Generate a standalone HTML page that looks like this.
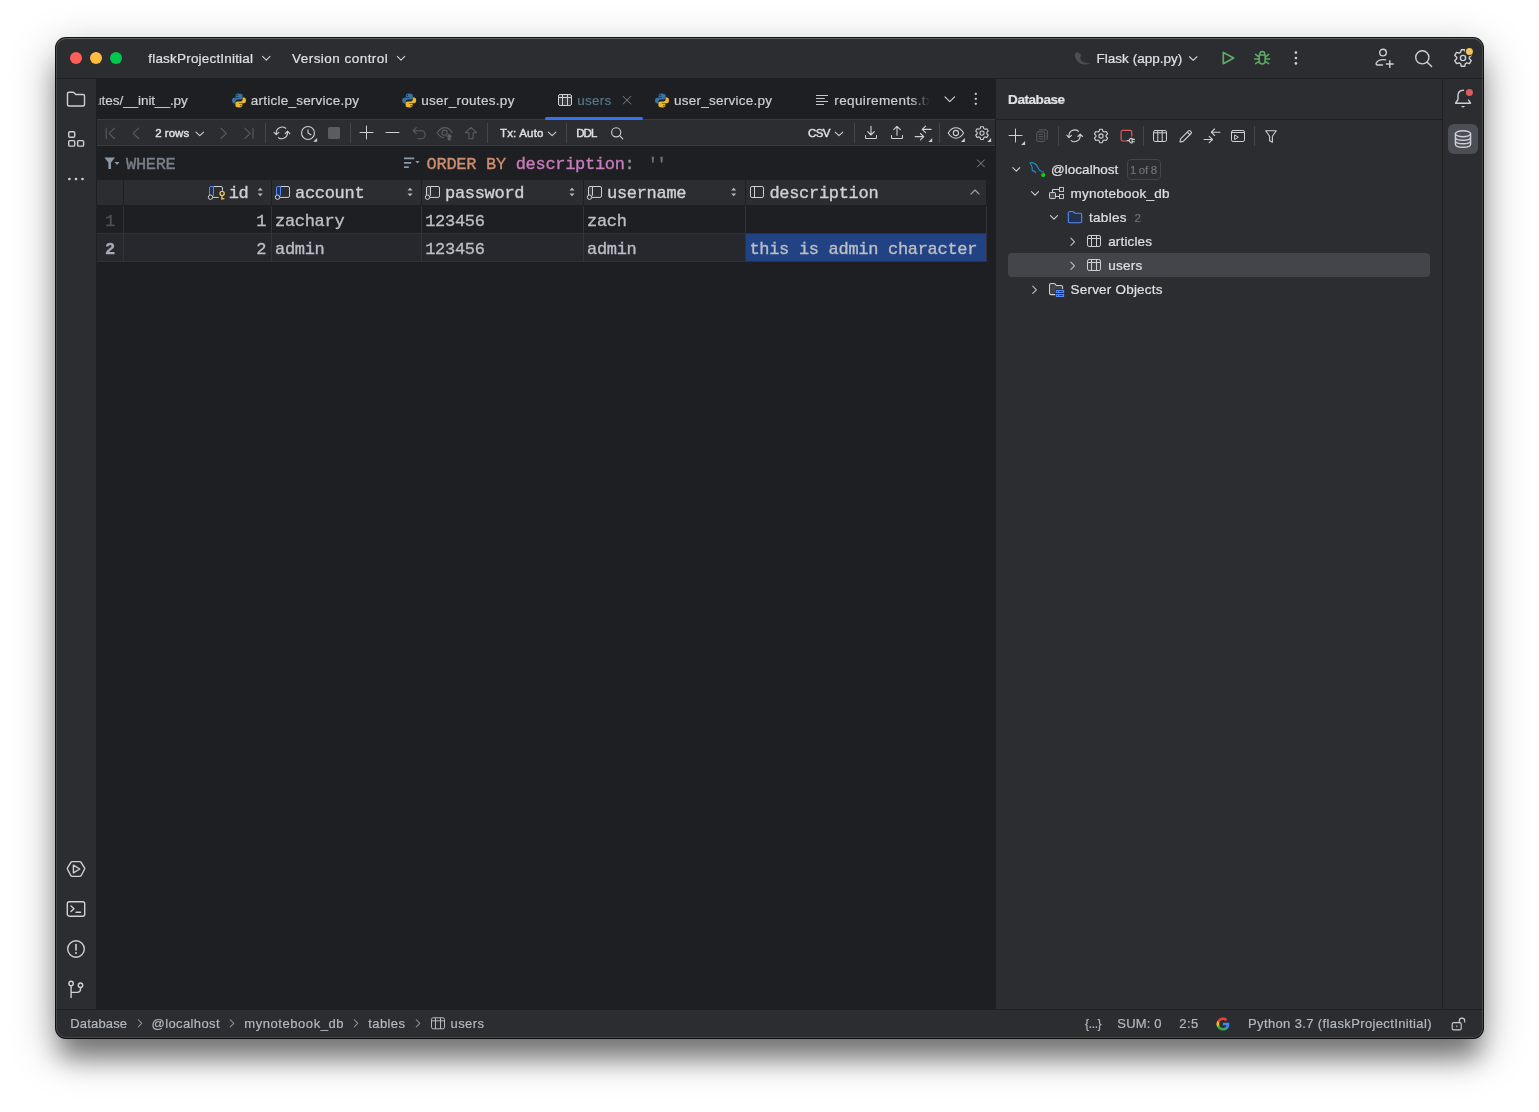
<!DOCTYPE html>
<html lang="en"><head><meta charset="utf-8"><title>flaskProjectInitial – users</title>
<style>
html,body{margin:0;padding:0;background:#fff;}
body{width:1539px;height:1112px;position:relative;overflow:hidden;}
#win{position:absolute;left:0;top:0;width:1539px;height:1112px;}
#frame{position:absolute;left:56px;top:38px;width:1427px;height:1000px;border-radius:10px;background:#2B2D30;
 box-shadow:0 0 0 1px rgba(0,0,0,.92),0 14px 44px rgba(0,0,0,.36),0 24px 24px -4px rgba(0,0,0,.37);overflow:hidden;}
.r{position:absolute;}
.i{position:absolute;overflow:visible;}
.t{position:absolute;white-space:pre;line-height:20px;height:20px;}
.s{font-family:"Liberation Sans",sans-serif;}
.m{font-family:"Liberation Mono",monospace;}
#in{position:absolute;left:-56px;top:-38px;width:1539px;height:1112px;}
.s{-webkit-text-stroke:0.2px currentColor;}
.m{-webkit-text-stroke:0.35px currentColor;}
#in{will-change:transform;}
#hl{position:absolute;left:56px;top:38px;width:1427px;height:1000px;border-radius:10px;box-shadow:inset 0 0 0 1px rgba(255,255,255,.13),inset 0 1px 0 rgba(255,255,255,.12);pointer-events:none;}

</style></head>
<body>
<div id="win">
<div id="frame"><div id="in">
<div class="r" style="left:56px;top:78px;width:1427px;height:1px;background:#1E1F22;"></div>
<div class="r" style="left:96px;top:79px;width:900px;height:930px;background:#1E1F22;"></div>
<div class="r" style="left:1442px;top:79px;width:1px;height:930px;background:#1E1F22;"></div>
<div class="r" style="left:996px;top:119px;width:446px;height:1px;background:#1E1F22;"></div>
<div class="r" style="left:56px;top:1009px;width:1427px;height:1px;background:#1E1F22;"></div>
<div class="r" style="left:97px;top:119px;width:898px;height:27px;background:#2B2D30;"></div>
<div class="r" style="left:97px;top:119px;width:898px;height:1px;background:#393B40;"></div>
<div class="r" style="left:97px;top:145px;width:898px;height:1px;background:#393B40;"></div>
<div class="r" style="left:70px;top:52px;width:12px;height:12px;background:#FF5F5A;border-radius:50%;"></div>
<div class="r" style="left:90px;top:52px;width:12px;height:12px;background:#FEBC40;border-radius:50%;"></div>
<div class="r" style="left:110px;top:52px;width:12px;height:12px;background:#00C84F;border-radius:50%;"></div>
<span class="t s" style="left:148.30px;top:48.62px;font-size:13.5px;color:#DFE1E5;letter-spacing:0.189px;">flaskProjectInitial</span>
<span class="t s" style="left:292.00px;top:48.62px;font-size:13.5px;color:#DFE1E5;letter-spacing:0.464px;">Version control</span>
<span class="t s" style="left:1096.60px;top:48.62px;font-size:13.5px;color:#DFE1E5;letter-spacing:0.005px;">Flask (app.py)</span>
<svg class="i" style="left:260px;top:52px;" width="13" height="13" fill="none"><g transform="translate(0.3 0.2)"><path d="M2.3 4.15 L6 7.85 L9.7 4.15" stroke="#CED0D6" stroke-width="1.1" stroke-linecap="round" stroke-linejoin="round"/></g></svg>
<svg class="i" style="left:395px;top:52px;" width="13" height="13" fill="none"><g transform="translate(0 0.2)"><path d="M2.3 4.15 L6 7.85 L9.7 4.15" stroke="#CED0D6" stroke-width="1.1" stroke-linecap="round" stroke-linejoin="round"/></g></svg>
<svg class="i" style="left:1187px;top:52px;" width="13" height="13" fill="none"><g transform="translate(0.2 0.6)"><path d="M2.3 4.15 L6 7.85 L9.7 4.15" stroke="#CED0D6" stroke-width="1.1" stroke-linecap="round" stroke-linejoin="round"/></g></svg>
<svg class="i" style="left:1074px;top:50px;" width="18" height="17" fill="none"><path d="M3.350 1.800C1.500 3 .6 4.800 1 6.200C1.500 8.500 2.600 10.100 4.500 12C6.500 13.800 9 14.600 11.500 14.600C13.500 14.600 15 14 16.100 13.350C13 13.400 10.500 13 8.500 11.700C7 10.600 6.300 9.500 6.500 8.500C6 7 6.500 5.500 7.500 4.400C6 4.200 4.500 3.300 3.350 1.800z" fill="#4C4F55"/></svg>
<svg class="i" style="left:1221px;top:50px;" width="17" height="17" fill="none"><path d="M2.300 2.400V13.700L12.700 8.050z" stroke="#5FAD65" stroke-width="1.700" stroke-linejoin="round"/></svg>
<svg class="i" style="left:1254px;top:50px;" width="18" height="17" fill="none"><path d="M5.900 4.100A2.400 2.700 0 0 1 10.700 4.100M5.200 5.100H11.100V10.600A2.950 3.500 0 0 1 5.200 10.600zM1.600 4.400L4.700 6.800M14.700 4.400L11.600 6.800M.6 9.100H5.200M11.100 9.100H15.700M1.600 13.600L4.800 11.600M14.700 13.600L11.500 11.600" stroke="#5FAD65" stroke-width="1.500" stroke-linecap="round" stroke-linejoin="round"/></svg>
<svg class="i" style="left:1293px;top:50px;" width="6" height="6" fill="none"><g transform="translate(0.6 0.3)"><circle cx="2.3" cy="2.3" r="1.3" fill="#CED0D6"/></g></svg>
<svg class="i" style="left:1293px;top:55px;" width="6" height="6" fill="none"><g transform="translate(0.6 0.7)"><circle cx="2.3" cy="2.3" r="1.3" fill="#CED0D6"/></g></svg>
<svg class="i" style="left:1293px;top:61px;" width="6" height="6" fill="none"><g transform="translate(0.6 0.1)"><circle cx="2.3" cy="2.3" r="1.3" fill="#CED0D6"/></g></svg>
<svg class="i" style="left:1374px;top:48px;" width="21" height="21" fill="none"><circle cx="9" cy="4.600" r="3.300" stroke="#CED0D6" stroke-width="1.4" stroke-linecap="round" stroke-linejoin="round"/><path d="M8.500 17H3.600C2.300 17 1.800 16 2.300 15C3.500 12.600 6 11.600 9 11.600C10 11.600 10.800 11.700 11.600 11.900" stroke="#CED0D6" stroke-width="1.4" stroke-linecap="round" stroke-linejoin="round"/><path d="M15.800 12.600V19.400M12.400 16H19.200" stroke="#CED0D6" stroke-width="1.4" stroke-linecap="round" stroke-linejoin="round"/></svg>
<svg class="i" style="left:1414px;top:49px;" width="21" height="21" fill="none"><circle cx="8.300" cy="8.300" r="6.600" stroke="#CED0D6" stroke-width="1.4" stroke-linecap="round" stroke-linejoin="round"/><path d="M13.200 13.200L17.600 17.600" stroke="#CED0D6" stroke-width="1.4" stroke-linecap="round" stroke-linejoin="round"/></svg>
<svg class="i" style="left:1453px;top:48px;" width="21" height="21" fill="none"><path d="M8.300 1.700h3.400l.6 2.500 1.700 1 2.500-.8 1.700 3-1.900 1.800v1.600l1.900 1.800-1.700 3-2.500-.8-1.700 1-.6 2.500H8.300l-.6-2.500-1.700-1-2.500.8-1.700-3 1.900-1.800V9.200L1.800 7.400l1.700-3 2.500.8 1.700-1z" stroke="#CED0D6" stroke-width="1.4" stroke-linecap="round" stroke-linejoin="round"/><circle cx="10" cy="10" r="2.600" stroke="#CED0D6" stroke-width="1.4" stroke-linecap="round" stroke-linejoin="round"/><circle cx="16.400" cy="3.500" r="4.600" fill="#2B2D30"/><circle cx="16.400" cy="3.500" r="3.500" fill="#F2C55C"/></svg>
<svg class="i" style="left:66px;top:89px;" width="21" height="21" fill="none"><path d="M1.500 4.700Q1.500 3.200 3 3.200H6.800Q7.500 3.200 8 3.700L9.800 5.500H17Q18.500 5.500 18.500 7V15.500Q18.500 17 17 17H3Q1.500 17 1.500 15.500z" stroke="#CED0D6" stroke-width="1.4" stroke-linecap="round" stroke-linejoin="round"/></svg>
<svg class="i" style="left:66px;top:129px;" width="21" height="21" fill="none"><rect x="2.700" y="2.800" width="6" height="5.500" rx="1.200" stroke="#CED0D6" stroke-width="1.4" stroke-linecap="round" stroke-linejoin="round"/><rect x="2.700" y="11.600" width="6" height="5.500" rx="1.200" stroke="#CED0D6" stroke-width="1.4" stroke-linecap="round" stroke-linejoin="round"/><rect x="11.600" y="11.600" width="6" height="5.500" rx="1.200" stroke="#CED0D6" stroke-width="1.4" stroke-linecap="round" stroke-linejoin="round"/></svg>
<svg class="i" style="left:67px;top:176px;" width="6" height="6" fill="none"><g transform="translate(0.05 0.65)"><circle cx="2.35" cy="2.35" r="1.35" fill="#CED0D6"/></g></svg>
<svg class="i" style="left:73px;top:176px;" width="6" height="6" fill="none"><g transform="translate(0.65 0.65)"><circle cx="2.35" cy="2.35" r="1.35" fill="#CED0D6"/></g></svg>
<svg class="i" style="left:80px;top:176px;" width="6" height="6" fill="none"><g transform="translate(0.15 0.65)"><circle cx="2.35" cy="2.35" r="1.35" fill="#CED0D6"/></g></svg>
<svg class="i" style="left:66px;top:859px;" width="21" height="21" fill="none"><path d="M6.300 1.800H13.700Q14.600 1.800 15.100 2.600L18.500 8.800Q19 9.500 18.500 10.200L15.100 17.400Q14.600 18.200 13.700 18.200H6.300Q5.400 18.200 4.900 17.400L1.500 10.200Q1 9.500 1.500 8.800L4.900 2.600Q5.400 1.800 6.300 1.800z" stroke="#CED0D6" stroke-width="1.4" stroke-linecap="round" stroke-linejoin="round" transform="translate(0 1) scale(1 .9)"/><path d="M7.400 6.200V13.800L13.800 10z" stroke="#CED0D6" stroke-width="1.4" stroke-linecap="round" stroke-linejoin="round"/></svg>
<svg class="i" style="left:66px;top:899px;" width="21" height="21" fill="none"><rect x="1.300" y="2.800" width="17.400" height="14.400" rx="2" stroke="#CED0D6" stroke-width="1.4" stroke-linecap="round" stroke-linejoin="round"/><path d="M5 7L8 9.800L5 12.600M10 13.200H14.500" stroke="#CED0D6" stroke-width="1.4" stroke-linecap="round" stroke-linejoin="round"/></svg>
<svg class="i" style="left:66px;top:939px;" width="21" height="21" fill="none"><circle cx="10" cy="10" r="8.300" stroke="#CED0D6" stroke-width="1.4" stroke-linecap="round" stroke-linejoin="round"/><path d="M10 5.500V11" stroke="#CED0D6" stroke-width="1.6" stroke-linecap="round" stroke-linejoin="round"/><circle cx="10" cy="14" r="1" fill="#CED0D6"/></svg>
<svg class="i" style="left:66px;top:979px;" width="21" height="21" fill="none"><circle cx="5.100" cy="4.500" r="2.200" stroke="#CED0D6" stroke-width="1.4" stroke-linecap="round" stroke-linejoin="round"/><circle cx="14.500" cy="6.200" r="2.200" stroke="#CED0D6" stroke-width="1.4" stroke-linecap="round" stroke-linejoin="round"/><path d="M5.100 6.800V18.500M14.500 8.500V10Q14.500 13.400 11 13.400H5.100" stroke="#CED0D6" stroke-width="1.4" stroke-linecap="round" stroke-linejoin="round"/></svg>
<svg class="i" style="left:1453px;top:88px;" width="21" height="21" fill="none"><path d="M10.500 2.200C7 2.200 5 4.500 5 7.500V11.500L2.500 15.200H17.500L15.500 12" stroke="#CED0D6" stroke-width="1.4" stroke-linecap="round" stroke-linejoin="round"/><path d="M7.800 18H12.200L10 19.800z" fill="#CED0D6"/><circle cx="16.400" cy="4.500" r="4.600" fill="#2B2D30"/><circle cx="16.400" cy="4.500" r="3.500" fill="#DB5C5C"/></svg>
<div class="r" style="left:1448px;top:124px;width:30px;height:30px;background:#4B4E55;border-radius:6px;"></div>
<svg class="i" style="left:1453px;top:129px;" width="21" height="21" fill="none"><ellipse cx="10" cy="4.800" rx="7.600" ry="3" stroke="#CED0D6" stroke-width="1.4" stroke-linecap="round" stroke-linejoin="round"/><path d="M2.400 4.800V15.200C2.400 16.900 5.800 18.200 10 18.200S17.600 16.900 17.600 15.200V4.800M2.400 8.300C2.400 10 5.800 11.300 10 11.300S17.600 10 17.600 8.300M2.400 11.800C2.400 13.500 5.800 14.800 10 14.800S17.600 13.500 17.600 11.800" stroke="#CED0D6" stroke-width="1.4" stroke-linecap="round" stroke-linejoin="round"/></svg>
<div class="r" style="left:97px;top:84px;width:110px;height:30px;overflow:hidden;-webkit-mask-image:linear-gradient(90deg,transparent 0,#000 4px);mask-image:linear-gradient(90deg,transparent 0,#000 4px)">
<span class="t s" style="left:-14.73px;top:6.62px;font-size:13.5px;color:#CDD0D6;letter-spacing:-0.061px;">routes/__init__.py</span>
</div>
<svg class="i" style="left:232px;top:93px;" width="15" height="15" fill="none"><g transform="translate(-1.000 -0.500) scale(1.0000 1.0000)"><path d="M7.9 1C5.9 1 4.6 1.5 4.6 3v1.7h3.5v.6H3.2C1.7 5.3 1 6.5 1 8.1c0 1.7.7 2.8 2.1 2.8h1.3V9.2c0-1.3 1.1-2.3 2.4-2.3h3c1 0 1.8-.8 1.8-1.8V3c0-1.2-1.2-2-3.700-2zM6.100 2c.4 0 .7.3.7.7s-.3.7-.7.7-.7-.3-.7-.7.3-.7.7-.7z" fill="#3773A5"/>
<path d="M8.100 15c2 0 3.300-.5 3.300-2v-1.700H7.900v-.6h4.900c1.500 0 2.200-1.200 2.200-2.800 0-1.700-.7-2.800-2.100-2.800h-1.300v1.700c0 1.300-1.100 2.300-2.400 2.300h-3c-1 0-1.800.8-1.800 1.800V13c0 1.200 1.200 2 3.700 2zm1.800-1c-.4 0-.7-.3-.7-.7s.3-.7.7-.7.7.3.7.7-.3.7-.7.7z" fill="#E6B930"/></g></svg>
<span class="t s" style="left:250.80px;top:90.62px;font-size:13.5px;color:#CDD0D6;letter-spacing:0.230px;">article_service.py</span>
<svg class="i" style="left:402px;top:93px;" width="15" height="15" fill="none"><g transform="translate(-0.800 -0.500) scale(1.0000 1.0000)"><path d="M7.9 1C5.9 1 4.6 1.5 4.6 3v1.7h3.5v.6H3.2C1.7 5.3 1 6.5 1 8.1c0 1.7.7 2.8 2.1 2.8h1.3V9.2c0-1.3 1.1-2.3 2.4-2.3h3c1 0 1.8-.8 1.8-1.8V3c0-1.2-1.2-2-3.700-2zM6.100 2c.4 0 .7.3.7.7s-.3.7-.7.7-.7-.3-.7-.7.3-.7.7-.7z" fill="#3773A5"/>
<path d="M8.100 15c2 0 3.300-.5 3.300-2v-1.700H7.900v-.6h4.900c1.500 0 2.200-1.200 2.200-2.800 0-1.700-.7-2.800-2.100-2.800h-1.300v1.700c0 1.300-1.100 2.300-2.400 2.300h-3c-1 0-1.800.8-1.800 1.800V13c0 1.200 1.200 2 3.700 2zm1.800-1c-.4 0-.7-.3-.7-.7s.3-.7.7-.7.7.3.7.7-.3.7-.7.7z" fill="#E6B930"/></g></svg>
<span class="t s" style="left:421.20px;top:90.62px;font-size:13.5px;color:#CDD0D6;letter-spacing:0.300px;">user_routes.py</span>
<svg class="i" style="left:558px;top:94px;" width="15" height="13" fill="none"><rect x=".5" y=".5" width="13" height="11" rx="1.600" stroke="#CED0D6" stroke-width="1" fill="#3A3C41"/><path d="M.5 3.500H13.500M4.500 .5V11.500M9.500 .5V11.500" stroke="#CED0D6" stroke-width="1"/></svg>
<span class="t s" style="left:577.20px;top:90.62px;font-size:13.5px;color:#55788B;letter-spacing:0.247px;">users</span>
<svg class="i" style="left:622px;top:95px;" width="11" height="11" fill="none"><g transform="translate(0 0.2)"><path d="M1.200 1.200L8.800 8.800M8.800 1.200L1.200 8.800" stroke="#7C8087" stroke-width="1" stroke-linecap="round"/></g></svg>
<div class="r" style="left:545px;top:117px;width:98px;height:3px;background:#3574F0;border-radius:1.5px;"></div>
<svg class="i" style="left:655px;top:93px;" width="15" height="15" fill="none"><g transform="translate(-1.000 -0.500) scale(1.0000 1.0000)"><path d="M7.9 1C5.9 1 4.6 1.5 4.6 3v1.7h3.5v.6H3.2C1.7 5.3 1 6.5 1 8.1c0 1.7.7 2.8 2.1 2.8h1.3V9.2c0-1.3 1.1-2.3 2.4-2.3h3c1 0 1.8-.8 1.8-1.8V3c0-1.2-1.2-2-3.700-2zM6.100 2c.4 0 .7.3.7.7s-.3.7-.7.7-.7-.3-.7-.7.3-.7.7-.7z" fill="#3773A5"/>
<path d="M8.100 15c2 0 3.300-.5 3.300-2v-1.700H7.900v-.6h4.900c1.500 0 2.200-1.200 2.200-2.800 0-1.700-.7-2.800-2.100-2.800h-1.300v1.700c0 1.300-1.100 2.300-2.400 2.300h-3c-1 0-1.800.8-1.800 1.800V13c0 1.200 1.200 2 3.700 2zm1.800-1c-.4 0-.7-.3-.7-.7s.3-.7.7-.7.7.3.7.7-.3.7-.7.7z" fill="#E6B930"/></g></svg>
<span class="t s" style="left:674.00px;top:90.62px;font-size:13.5px;color:#CDD0D6;letter-spacing:0.247px;">user_service.py</span>
<svg class="i" style="left:816px;top:95px;" width="14" height="12" fill="none"><path d="M0 .5H12M0 3.500H8.800M0 6.500H12M0 9.500H8" stroke="#C4C7CD" stroke-width="1"/></svg>
<div class="r" style="left:830px;top:84px;width:100px;height:30px;overflow:hidden;-webkit-mask-image:linear-gradient(90deg,#000 0,#000 81px,transparent 100px);mask-image:linear-gradient(90deg,#000 0,#000 81px,transparent 100px)">
<span class="t s" style="left:4.30px;top:6.62px;font-size:13.5px;color:#CDD0D6;letter-spacing:0.380px;">requirements.txt</span>
</div>
<svg class="i" style="left:943px;top:93px;" width="13" height="13" fill="none"><g transform="translate(0.8 0.2)"><path d="M1.2000000000000002 3.6 L6 8.4 L10.8 3.6" stroke="#CED0D6" stroke-width="1.15" stroke-linecap="round" stroke-linejoin="round"/></g></svg>
<svg class="i" style="left:973px;top:91px;" width="6" height="6" fill="none"><g transform="translate(0.65 0.65)"><circle cx="2.15" cy="2.15" r="1.15" fill="#CED0D6"/></g></svg>
<svg class="i" style="left:973px;top:96px;" width="6" height="6" fill="none"><g transform="translate(0.65 0.65)"><circle cx="2.15" cy="2.15" r="1.15" fill="#CED0D6"/></g></svg>
<svg class="i" style="left:973px;top:101px;" width="6" height="6" fill="none"><g transform="translate(0.65 0.65)"><circle cx="2.15" cy="2.15" r="1.15" fill="#CED0D6"/></g></svg>
<svg class="i" style="left:102px;top:125px;" width="17" height="17" fill="none"><g transform="translate(0.2 0.1)"><path d="M4 3V13.400M12.200 3L6.800 8.200L12.200 13.400" stroke="#5A5D63" stroke-width="1.1" stroke-linecap="round" stroke-linejoin="round"/></g></svg>
<svg class="i" style="left:128px;top:125px;" width="17" height="17" fill="none"><g transform="translate(0.0 0.1)"><path d="M10.600 3L5.200 8.200L10.600 13.400" stroke="#5A5D63" stroke-width="1.1" stroke-linecap="round" stroke-linejoin="round"/></g></svg>
<span class="t s" style="left:155.20px;top:122.92px;font-size:11.5px;color:#DFE1E5;letter-spacing:0.026px;-webkit-text-stroke:0.4px currentColor;">2 rows</span>
<svg class="i" style="left:193px;top:127px;" width="13" height="13" fill="none"><g transform="translate(0.8 0.9)"><path d="M2.2 4.25 L6 7.75 L9.8 4.25" stroke="#CED0D6" stroke-width="1.1" stroke-linecap="round" stroke-linejoin="round"/></g></svg>
<svg class="i" style="left:215px;top:125px;" width="17" height="17" fill="none"><g transform="translate(0.5 0.1)"><path d="M5.400 3L10.800 8.200L5.400 13.400" stroke="#5A5D63" stroke-width="1.1" stroke-linecap="round" stroke-linejoin="round"/></g></svg>
<svg class="i" style="left:241px;top:125px;" width="17" height="17" fill="none"><g transform="translate(0.0 0.1)"><path d="M12 3V13.400M3.800 3L9.200 8.200L3.800 13.400" stroke="#5A5D63" stroke-width="1.1" stroke-linecap="round" stroke-linejoin="round"/></g></svg>
<div class="r" style="left:265.0px;top:123px;width:1px;height:20px;background:#43454A;"></div>
<svg class="i" style="left:274px;top:125px;" width="17" height="17" fill="none"><g transform="translate(0.3 0.2)"><path d="M11.400 3.100A5.800 5.800 0 0 0 2 7.800V9.300M-.2 7.100L2 9.500L4.500 7.200M4.100 12.500A5.800 5.800 0 0 0 13.200 7.800V6.300M10.900 8.400L13.200 6L15.500 8.400" stroke="#CED0D6" stroke-width="1.100" stroke-linecap="round" stroke-linejoin="round"/></g></svg>
<svg class="i" style="left:300px;top:125px;" width="19" height="19" fill="none"><circle cx="8" cy="8" r="6.500" stroke="#CED0D6" stroke-width="1.1" stroke-linecap="round" stroke-linejoin="round"/><path d="M8 4.800V8L10.900 9.800" stroke="#CED0D6" stroke-width="1.1" stroke-linecap="round" stroke-linejoin="round"/><path d="M17.100 12.900V16.800H13.200z" fill="#CED0D6"/></svg>
<div class="r" style="left:328.2px;top:127px;width:12px;height:12px;background:#5C5C5E;border-radius:1.5px;"></div>
<div class="r" style="left:350.1px;top:123px;width:1px;height:20px;background:#43454A;"></div>
<svg class="i" style="left:358px;top:124px;" width="18" height="18" fill="none"><path d="M8.500 2V15M2 8.500H15" stroke="#CED0D6" stroke-width="1" stroke-linecap="round" stroke-linejoin="round"/></svg>
<svg class="i" style="left:384px;top:124px;" width="18" height="18" fill="none"><path d="M2 8.500H15" stroke="#CED0D6" stroke-width="1" stroke-linecap="round" stroke-linejoin="round"/></svg>
<svg class="i" style="left:411px;top:125px;" width="17" height="17" fill="none"><g transform="translate(0.4 0.2)"><path d="M4.800 2.500L1.800 5.500L4.800 8.500M2 5.500H9.800A4 4 0 0 1 9.800 13.500H6.500" stroke="#5A5D63" stroke-width="1.1" stroke-linecap="round" stroke-linejoin="round"/></g></svg>
<svg class="i" style="left:437px;top:125px;" width="17" height="17" fill="none"><path d="M.2 7.700C2.500 4 5 2.600 7.800 2.600S13 4 15.400 7.700M.2 7.700C2 10.500 4 12.300 6.800 12.700" stroke="#5A5D63" stroke-width="1.1" stroke-linecap="round" stroke-linejoin="round"/><circle cx="7.600" cy="7.700" r="2.600" stroke="#5A5D63" stroke-width="1.1" stroke-linecap="round" stroke-linejoin="round"/><path d="M12.200 8.100L15.900 12H14.100V15.800H10.300V12H8.500z" fill="#5A5D63" stroke="#2B2D30" stroke-width=".7"/></svg>
<svg class="i" style="left:462px;top:125px;" width="17" height="17" fill="none"><g transform="translate(0.8 0)"><path d="M8.200 2.300L13.800 7.700H10.300V13.700H6.100V7.700H2.600z" stroke="#5A5D63" stroke-width="1.1" stroke-linecap="round" stroke-linejoin="round"/></g></svg>
<div class="r" style="left:487.0px;top:123px;width:1px;height:20px;background:#43454A;"></div>
<span class="t s" style="left:500.00px;top:122.92px;font-size:11.5px;color:#DFE1E5;letter-spacing:0.173px;-webkit-text-stroke:0.4px currentColor;">Tx: Auto</span>
<svg class="i" style="left:546px;top:127px;" width="13" height="13" fill="none"><g transform="translate(0.1 0.9)"><path d="M2.2 4.25 L6 7.75 L9.8 4.25" stroke="#CED0D6" stroke-width="1.1" stroke-linecap="round" stroke-linejoin="round"/></g></svg>
<div class="r" style="left:566.3px;top:123px;width:1px;height:20px;background:#43454A;"></div>
<span class="t s" style="left:576.30px;top:122.92px;font-size:11.5px;color:#DFE1E5;letter-spacing:-1.003px;-webkit-text-stroke:0.4px currentColor;">DDL</span>
<svg class="i" style="left:609px;top:125px;" width="17" height="17" fill="none"><circle cx="7.200" cy="7.300" r="4.600" stroke="#CED0D6" stroke-width="1.1" stroke-linecap="round" stroke-linejoin="round"/><path d="M10.600 10.700L13.800 13.900" stroke="#CED0D6" stroke-width="1.1" stroke-linecap="round" stroke-linejoin="round"/></svg>
<span class="t s" style="left:808.00px;top:122.92px;font-size:11.5px;color:#DFE1E5;letter-spacing:-0.623px;-webkit-text-stroke:0.4px currentColor;">CSV</span>
<svg class="i" style="left:833px;top:127px;" width="13" height="13" fill="none"><g transform="translate(0 0.9)"><path d="M2.2 4.25 L6 7.75 L9.8 4.25" stroke="#CED0D6" stroke-width="1.1" stroke-linecap="round" stroke-linejoin="round"/></g></svg>
<div class="r" style="left:853.8px;top:123px;width:1px;height:20px;background:#43454A;"></div>
<svg class="i" style="left:863px;top:125px;" width="17" height="17" fill="none"><path d="M8 1.300V9.900M4.700 6.700L8 10L11.300 6.700" stroke="#CED0D6" stroke-width="1.1" stroke-linecap="round" stroke-linejoin="round"/><path d="M2.500 10.500V13.500H13.500V10.500" stroke="#CED0D6" stroke-width="1" stroke-linecap="round" stroke-linejoin="round"/></svg>
<svg class="i" style="left:889px;top:125px;" width="17" height="17" fill="none"><path d="M8 10.300V1.500M4.700 4.700L8 1.400L11.300 4.700" stroke="#CED0D6" stroke-width="1.1" stroke-linecap="round" stroke-linejoin="round"/><path d="M2.500 10.500V13.500H13.500V10.500" stroke="#CED0D6" stroke-width="1" stroke-linecap="round" stroke-linejoin="round"/></svg>
<svg class="i" style="left:915px;top:125px;" width="19" height="19" fill="none"><path d="M16.100 4.400H7.300M10.600 1.200L7.200 4.400L10.600 7.700M.2 11.650H8.700M5.400 8.500L8.800 11.650L5.400 14.800" stroke="#CED0D6" stroke-width="1.1" stroke-linecap="round" stroke-linejoin="round"/><path d="M17.2 13.099999999999998V16.9H13.399999999999999z" fill="#CED0D6"/></svg>
<div class="r" style="left:939.0px;top:123px;width:1px;height:20px;background:#43454A;"></div>
<svg class="i" style="left:948px;top:125px;" width="19" height="19" fill="none"><path d="M.2 8C2.400 4.500 5 2.800 7.900 2.800S13.400 4.500 15.600 8C13.400 11.500 10.800 13.200 7.900 13.200S2.400 11.500 .2 8z" stroke="#CED0D6" stroke-width="1.1" stroke-linecap="round" stroke-linejoin="round"/><circle cx="7.900" cy="8" r="2.600" stroke="#CED0D6" stroke-width="1.1" stroke-linecap="round" stroke-linejoin="round"/><path d="M16.8 13.099999999999998V16.9H13.0z" fill="#CED0D6"/></svg>
<svg class="i" style="left:974px;top:125px;" width="19" height="19" fill="none"><g transform="translate(8 8.100) scale(.95) translate(-8 -8)"><path d="M6.600 1.300h2.800l.5 2 1.300.75 2-.6 1.400 2.400-1.500 1.450v1.400l1.500 1.450-1.400 2.400-2-.6-1.300.75-.5 2H6.600l-.5-2-1.300-.75-2 .6-1.400-2.400 1.500-1.450V7.300L1.400 5.850l1.400-2.400 2 .6 1.300-.75z" stroke="#CED0D6" stroke-width="1.15" stroke-linecap="round" stroke-linejoin="round"/><circle cx="8" cy="8" r="2.200" stroke="#CED0D6" stroke-width="1.15" stroke-linecap="round" stroke-linejoin="round"/></g><path d="M17.1 13.099999999999998V16.9H13.3z" fill="#CED0D6"/></svg>
<svg class="i" style="left:104px;top:157px;" width="17" height="14" fill="none"><path d="M.3 .5H11.100L7 5.600V11.900H4.400V5.600z" fill="#8C99A6"/><path d="M10.500 5H15.500L13 8z" fill="#8C99A6"/></svg>
<span class="t m" style="left:126.00px;top:154.77px;font-size:17px;color:#78808B;letter-spacing:-0.302px;">WHERE</span>
<svg class="i" style="left:404px;top:157px;" width="17" height="12" fill="none"><g transform="translate(0 0.5)"><path d="M0 .9H10.200M0 5.300H7.200M0 9.700H4.800" stroke="#8C99A6" stroke-width="1.700"/><path d="M11.300 3.600H15.700L13.500 5.900z" fill="#8C99A6"/></g></svg>
<span class="t m" style="left:426.60px;top:154.77px;font-size:17px;color:#CF8E6D;letter-spacing:-0.302px;">ORDER BY</span>
<span class="t m" style="left:515.70px;top:154.77px;font-size:17px;color:#C77DBB;letter-spacing:-0.302px;">description</span>
<span class="t m" style="left:624.60px;top:154.77px;font-size:17px;color:#8C99A6;letter-spacing:-0.302px;">:</span>
<span class="t m" style="left:647.80px;top:154.77px;font-size:17px;color:#70747B;letter-spacing:-1.400px;">&#x27;&#x27;</span>
<svg class="i" style="left:976px;top:158px;" width="11" height="11" fill="none"><g transform="translate(0 0.5)"><path d="M1.400 1.400L8.400 8.400M8.400 1.400L1.400 8.400" stroke="#868A91" stroke-width="1" stroke-linecap="round"/></g></svg>
<div class="r" style="left:97px;top:180px;width:889px;height:25px;background:#2B2D30;"></div>
<div class="r" style="left:123px;top:180px;width:1px;height:25px;background:#1E1F22;"></div>
<div class="r" style="left:271px;top:180px;width:1px;height:25px;background:#1E1F22;"></div>
<div class="r" style="left:421px;top:180px;width:1px;height:25px;background:#1E1F22;"></div>
<div class="r" style="left:583px;top:180px;width:1px;height:25px;background:#1E1F22;"></div>
<div class="r" style="left:745px;top:180px;width:1px;height:25px;background:#1E1F22;"></div>
<div class="r" style="left:97px;top:234px;width:889px;height:27px;background:#26282E;"></div>
<div class="r" style="left:97px;top:233px;width:890px;height:1px;background:#2F3135;"></div>
<div class="r" style="left:97px;top:261px;width:890px;height:1px;background:#2F3135;"></div>
<div class="r" style="left:123px;top:206px;width:1px;height:56px;background:#313438;"></div>
<div class="r" style="left:271px;top:206px;width:1px;height:56px;background:#313438;"></div>
<div class="r" style="left:421px;top:206px;width:1px;height:56px;background:#313438;"></div>
<div class="r" style="left:583px;top:206px;width:1px;height:56px;background:#313438;"></div>
<div class="r" style="left:745px;top:206px;width:1px;height:56px;background:#313438;"></div>
<div class="r" style="left:986px;top:206px;width:1px;height:56px;background:#313438;"></div>
<div class="r" style="left:97px;top:206px;width:26px;height:27px;background:#1E1F22;"></div>
<div class="r" style="left:746px;top:234px;width:240px;height:27px;background:#214283;"></div>
<svg class="i" style="left:208px;top:185px;" width="17" height="16" fill="none"><g transform="translate(0.4 0.4)"><path d="M5.100 1.100H12.600Q14.100 1.100 14.100 2.600V5.200M4.200 12H10.300" stroke="#CED0D6" stroke-width="1" fill="none"/><path d="M1.100 9.800V2.600Q1.100 1.100 2.600 1.100H5.100V10.300" stroke="#548AF7" stroke-width="1" fill="#25324D"/><circle cx="2.100" cy="11.800" r="2.200" stroke="#CED0D6" stroke-width="1" fill="#2B2D30"/><circle cx="13.700" cy="8.100" r="2.100" stroke="#F2C55C" stroke-width="1.300" fill="none"/><path d="M13.500 10.300V14.400M13.500 13.300H16" stroke="#F2C55C" stroke-width="1.300"/></g></svg>
<span class="t m" style="left:228.70px;top:183.97px;font-size:17px;color:#CED0D6;letter-spacing:-0.302px;">id</span>
<svg class="i" style="left:257px;top:187px;" width="7" height="11" fill="none"><g transform="translate(0.2 0)"><path d="M.5 3.500L3 .7L5.500 3.500zM.5 6.500L3 9.300L5.500 6.500z" fill="#B9BCC3"/></g></svg>
<svg class="i" style="left:275px;top:185px;" width="17" height="16" fill="none"><g transform="translate(0.4 0.4)"><path d="M5.100 1.100H12.600Q14.100 1.100 14.100 2.600V10.500Q14.100 12 12.600 12H4.200" stroke="#CED0D6" stroke-width="1" fill="none"/><path d="M1.100 9.800V2.600Q1.100 1.100 2.600 1.100H5.100V10.300" stroke="#548AF7" stroke-width="1" fill="#25324D"/><circle cx="2.100" cy="11.800" r="2.200" stroke="#CED0D6" stroke-width="1" fill="#2B2D30"/></g></svg>
<span class="t m" style="left:295.00px;top:183.97px;font-size:17px;color:#CED0D6;letter-spacing:-0.302px;">account</span>
<svg class="i" style="left:407px;top:187px;" width="7" height="11" fill="none"><path d="M.5 3.500L3 .7L5.500 3.500zM.5 6.500L3 9.300L5.500 6.500z" fill="#B9BCC3"/></svg>
<svg class="i" style="left:425px;top:185px;" width="17" height="16" fill="none"><g transform="translate(0.4 0.4)"><path d="M5.100 1.100H12.600Q14.100 1.100 14.100 2.600V10.500Q14.100 12 12.600 12H4.200" stroke="#CED0D6" stroke-width="1" fill="none"/><path d="M1.100 9.800V2.600Q1.100 1.100 2.600 1.100H5.100V10.300" stroke="#CED0D6" stroke-width="1" fill="#3E4045"/><circle cx="2.100" cy="11.800" r="2.200" stroke="#CED0D6" stroke-width="1" fill="#2B2D30"/></g></svg>
<span class="t m" style="left:445.00px;top:183.97px;font-size:17px;color:#CED0D6;letter-spacing:-0.302px;">password</span>
<svg class="i" style="left:569px;top:187px;" width="7" height="11" fill="none"><path d="M.5 3.500L3 .7L5.500 3.500zM.5 6.500L3 9.300L5.500 6.500z" fill="#B9BCC3"/></svg>
<svg class="i" style="left:587px;top:185px;" width="17" height="16" fill="none"><g transform="translate(0.4 0.4)"><path d="M5.100 1.100H12.600Q14.100 1.100 14.100 2.600V10.500Q14.100 12 12.600 12H4.200" stroke="#CED0D6" stroke-width="1" fill="none"/><path d="M1.100 9.800V2.600Q1.100 1.100 2.600 1.100H5.100V10.300" stroke="#CED0D6" stroke-width="1" fill="#3E4045"/><circle cx="2.100" cy="11.800" r="2.200" stroke="#CED0D6" stroke-width="1" fill="#2B2D30"/></g></svg>
<span class="t m" style="left:607.00px;top:183.97px;font-size:17px;color:#CED0D6;letter-spacing:-0.302px;">username</span>
<svg class="i" style="left:730px;top:187px;" width="7" height="11" fill="none"><g transform="translate(0.7 0)"><path d="M.5 3.500L3 .7L5.500 3.500zM.5 6.500L3 9.300L5.500 6.500z" fill="#B9BCC3"/></g></svg>
<svg class="i" style="left:750px;top:186px;" width="17" height="14" fill="none"><rect x=".5" y=".5" width="13" height="11" rx="1.600" stroke="#CED0D6" stroke-width="1"/><path d="M4.500 .5V11.500" stroke="#CED0D6" stroke-width="1"/></svg>
<span class="t m" style="left:769.40px;top:183.97px;font-size:17px;color:#CED0D6;letter-spacing:-0.302px;">description</span>
<svg class="i" style="left:970px;top:188px;" width="11" height="9" fill="none"><path d="M1 6L5 2L9 6" stroke="#9DA0A8" stroke-width="1.100" stroke-linecap="round" stroke-linejoin="round"/></svg>
<span class="t m" style="left:105.00px;top:211.77px;font-size:17px;color:#4B5059;letter-spacing:-0.302px;">1</span>
<span class="t m" style="left:105.00px;top:239.87px;font-size:17px;color:#A8ABB2;font-weight:700;letter-spacing:-0.302px;">2</span>
<span class="t m" style="left:256.20px;top:211.77px;font-size:17px;color:#BCBEC4;letter-spacing:-0.302px;">1</span>
<span class="t m" style="left:256.20px;top:239.87px;font-size:17px;color:#BCBEC4;letter-spacing:-0.302px;">2</span>
<span class="t m" style="left:275.00px;top:211.77px;font-size:17px;color:#BCBEC4;letter-spacing:-0.302px;">zachary</span>
<span class="t m" style="left:275.00px;top:239.87px;font-size:17px;color:#BCBEC4;letter-spacing:-0.302px;">admin</span>
<span class="t m" style="left:425.20px;top:211.77px;font-size:17px;color:#BCBEC4;letter-spacing:-0.302px;">123456</span>
<span class="t m" style="left:425.20px;top:239.87px;font-size:17px;color:#BCBEC4;letter-spacing:-0.302px;">123456</span>
<span class="t m" style="left:587.00px;top:211.77px;font-size:17px;color:#BCBEC4;letter-spacing:-0.302px;">zach</span>
<span class="t m" style="left:587.00px;top:239.87px;font-size:17px;color:#BCBEC4;letter-spacing:-0.302px;">admin</span>
<span class="t m" style="left:749.40px;top:239.87px;font-size:17px;color:#BCBEC4;letter-spacing:-0.302px;">this is admin character</span>
<span class="t s" style="left:1008.10px;top:90.12px;font-size:13.5px;color:#DFE1E5;font-weight:700;letter-spacing:-0.433px;">Database</span>
<svg class="i" style="left:1007px;top:127px;" width="21" height="21" fill="none"><path d="M8.500 2V15M2 8.500H15" stroke="#CED0D6" stroke-width="1" stroke-linecap="round" stroke-linejoin="round"/><path d="M18.100 14.100V18.100H14.100z" fill="#CED0D6"/></svg>
<svg class="i" style="left:1034px;top:128px;" width="17" height="17" fill="none"><rect x="2.800" y="3.800" width="8" height="9.700" rx="1.500" stroke="#5A5D63" stroke-width="1" stroke-linecap="round" stroke-linejoin="round"/><path d="M5.300 1.800H11.800Q13.300 1.800 13.300 3.300V11.300" stroke="#5A5D63" stroke-width="1" stroke-linecap="round" stroke-linejoin="round"/><path d="M5 6.300H8.800M5 8.600H8.800M5 10.900H8.800" stroke="#5A5D63" stroke-width="0.9" stroke-linecap="round" stroke-linejoin="round"/></svg>
<div class="r" style="left:1058px;top:126px;width:1px;height:20px;background:#43454A;"></div>
<svg class="i" style="left:1067px;top:128px;" width="17" height="17" fill="none"><g transform="translate(0 0.1)"><path d="M11.400 3.100A5.800 5.800 0 0 0 2 7.800V9.300M-.2 7.100L2 9.500L4.500 7.200M4.100 12.500A5.800 5.800 0 0 0 13.200 7.800V6.300M10.900 8.400L13.200 6L15.500 8.400" stroke="#CED0D6" stroke-width="1.100" stroke-linecap="round" stroke-linejoin="round"/></g></svg>
<svg class="i" style="left:1093px;top:128px;" width="17" height="17" fill="none"><path d="M6.600 1.300h2.800l.5 2 1.300.75 2-.6 1.400 2.400-1.500 1.450v1.400l1.500 1.450-1.400 2.400-2-.6-1.300.75-.5 2H6.600l-.5-2-1.300-.75-2 .6-1.400-2.400 1.500-1.450V7.300L1.400 5.850l1.400-2.400 2 .6 1.300-.75z" stroke="#CED0D6" stroke-width="1.1" stroke-linecap="round" stroke-linejoin="round"/><circle cx="8" cy="8" r="2.100" stroke="#CED0D6" stroke-width="1.1" stroke-linecap="round" stroke-linejoin="round"/></svg>
<svg class="i" style="left:1119px;top:129px;" width="17" height="17" fill="none"><g transform="translate(0.8 0.0)"><path d="M8.500 12H2.800Q1.300 12 1.300 10.500V2.800Q1.300 1.300 2.800 1.300H10.500Q12 1.300 12 2.800V7" stroke="#DB5C5C" stroke-width="1.2" stroke-linecap="round" stroke-linejoin="round"/><path d="M9.300 11.500H7.500M11.800 9.300A2.300 2.300 0 0 0 11.800 13.900H12.300V9.300zM12.300 10.400H14.600M12.300 12.800H14.600" stroke="#CED0D6" stroke-width="1.1" stroke-linecap="round" stroke-linejoin="round"/></g></svg>
<div class="r" style="left:1143px;top:126px;width:1px;height:20px;background:#43454A;"></div>
<svg class="i" style="left:1153px;top:130px;" width="15" height="13" fill="none"><rect x=".5" y=".5" width="13" height="11" rx="1.600" stroke="#CED0D6" stroke-width="1" stroke-linecap="round" stroke-linejoin="round"/><path d="M.5 2.800H13.500M4.800 .5V11.500M9.200 .5V11.500" stroke="#CED0D6" stroke-width="1" stroke-linecap="round" stroke-linejoin="round"/></svg>
<svg class="i" style="left:1178px;top:128px;" width="17" height="17" fill="none"><path d="M2 14L2.600 10.800L10.500 2.900Q11.300 2.100 12.100 2.900L13.100 3.900Q13.900 4.700 13.100 5.500L5.200 13.400zM9.300 4.200L11.800 6.700" stroke="#CED0D6" stroke-width="1.1" stroke-linecap="round" stroke-linejoin="round"/></svg>
<svg class="i" style="left:1203px;top:127px;" width="19" height="19" fill="none"><path d="M16.900 5.200H8.400M11.600 2L8.300 5.200L11.600 8.500M1.100 12.500H9.400M6.200 9.300L9.500 12.500L6.200 15.700" stroke="#CED0D6" stroke-width="1.1" stroke-linecap="round" stroke-linejoin="round"/></svg>
<svg class="i" style="left:1231px;top:130px;" width="15" height="13" fill="none"><rect x=".5" y=".5" width="13" height="11" rx="1.600" stroke="#CED0D6" stroke-width="1" stroke-linecap="round" stroke-linejoin="round"/><path d="M.5 2.500H13.500" stroke="#CED0D6" stroke-width="1" stroke-linecap="round" stroke-linejoin="round"/><path d="M3.600 5.300V9.500L7 7.400z" stroke="#CED0D6" stroke-width="1" stroke-linecap="round" stroke-linejoin="round"/></svg>
<div class="r" style="left:1254px;top:126px;width:1px;height:20px;background:#43454A;"></div>
<svg class="i" style="left:1264px;top:129px;" width="15" height="15" fill="none"><path d="M1.700 1.800H12.300L8.400 7.200V13.200L5.600 11.700V7.200z" stroke="#CED0D6" stroke-width="1.1" stroke-linecap="round" stroke-linejoin="round"/></svg>
<div class="r" style="left:1008px;top:253px;width:422px;height:24px;background:#43454A;border-radius:4px;"></div>
<svg class="i" style="left:1010px;top:163px;" width="13" height="13" fill="none"><g transform="translate(0.3 0.3)"><path d="M2.5 4.25 L6 7.75 L9.5 4.25" stroke="#CED0D6" stroke-width="1.1" stroke-linecap="round" stroke-linejoin="round"/></g></svg>
<svg class="i" style="left:1029px;top:161px;" width="18" height="18" fill="none"><path d="M1 1.900C2.500 1.200 4 1.500 5.100 2.200C6.500 3 7.500 4.200 8.200 5.300C9 6.600 9.500 7.900 10.300 8.900C11.500 10.200 13.200 10.300 14.500 11.200M1 1.900C1.500 3.300 2.600 4.500 3 5.800C3.400 7 2.900 8.300 3.300 9.500C3.800 10.200 4.500 9.600 5.100 10C5.700 10.400 6.200 11 6.700 11.600" stroke="#1B9AD6" stroke-width="1.050" stroke-linecap="round" stroke-linejoin="round"/><circle cx="14.200" cy="14.100" r="2.100" fill="#0BD40B"/></svg>
<span class="t s" style="left:1051.10px;top:159.52px;font-size:13.5px;color:#DFE1E5;letter-spacing:0.013px;">@localhost</span>
<div class="r" style="left:1127px;top:159px;width:34px;height:21px;background:transparent;border:1px solid #43454A;border-radius:4px;box-sizing:border-box;"></div>
<span class="t s" style="left:1129.90px;top:160.02px;font-size:11.5px;color:#6F737A;letter-spacing:-0.314px;">1 of 8</span>
<svg class="i" style="left:1029px;top:187px;" width="13" height="13" fill="none"><g transform="translate(0 0.3)"><path d="M2.5 4.25 L6 7.75 L9.5 4.25" stroke="#CED0D6" stroke-width="1.1" stroke-linecap="round" stroke-linejoin="round"/></g></svg>
<svg class="i" style="left:1048px;top:186px;" width="17" height="15" fill="none"><g stroke="#CED0D6" stroke-width="1"><rect x="1.500" y="6.500" width="6" height="6" rx=".8" fill="#494B51"/><rect x="11.500" y="1.500" width="4" height="4" stroke-width=".9"/><rect x="11.500" y="8.500" width="4" height="4" stroke-width=".9"/><path d="M4.500 6.500V3.500H11.500M7.500 10.500H11.500"/></g></svg>
<span class="t s" style="left:1070.40px;top:183.52px;font-size:13.5px;color:#DFE1E5;letter-spacing:0.261px;">mynotebook_db</span>
<svg class="i" style="left:1048px;top:211px;" width="13" height="13" fill="none"><g transform="translate(0 0.3)"><path d="M2.5 4.25 L6 7.75 L9.5 4.25" stroke="#CED0D6" stroke-width="1.1" stroke-linecap="round" stroke-linejoin="round"/></g></svg>
<svg class="i" style="left:1067px;top:210px;" width="17" height="15" fill="none"><path d="M1.300 3Q1.300 1.500 2.800 1.500H5.500Q6.200 1.500 6.700 2L8 3.300H13.200Q14.700 3.300 14.700 4.800V11.200Q14.700 12.700 13.200 12.700H2.800Q1.300 12.700 1.300 11.200z" stroke="#548AF7" stroke-width="1.100" fill="#25324D" stroke-linejoin="round"/></svg>
<span class="t s" style="left:1089.10px;top:207.52px;font-size:13.5px;color:#DFE1E5;letter-spacing:0.255px;">tables</span>
<span class="t s" style="left:1134.60px;top:208.22px;font-size:11.5px;color:#6F737A;">2</span>
<svg class="i" style="left:1066px;top:235px;" width="13" height="13" fill="none"><g transform="translate(0.7 0.8)"><path d="M4.2 2.4 L7.8 6 L4.2 9.6" stroke="#C0C3C9" stroke-width="1.1" stroke-linecap="round" stroke-linejoin="round"/></g></svg>
<svg class="i" style="left:1087px;top:235px;" width="15" height="13" fill="none"><rect x=".5" y=".5" width="13" height="11" rx="1.600" stroke="#CED0D6" stroke-width="1" fill="none"/><path d="M.5 3.500H13.500M4.500 .5V11.500M9.500 .5V11.500" stroke="#CED0D6" stroke-width="1"/></svg>
<span class="t s" style="left:1108.20px;top:231.52px;font-size:13.5px;color:#DFE1E5;letter-spacing:0.148px;">articles</span>
<svg class="i" style="left:1066px;top:259px;" width="13" height="13" fill="none"><g transform="translate(0.7 0.8)"><path d="M4.2 2.4 L7.8 6 L4.2 9.6" stroke="#C0C3C9" stroke-width="1.1" stroke-linecap="round" stroke-linejoin="round"/></g></svg>
<svg class="i" style="left:1087px;top:259px;" width="15" height="13" fill="none"><rect x=".5" y=".5" width="13" height="11" rx="1.600" stroke="#CED0D6" stroke-width="1" fill="none"/><path d="M.5 3.500H13.500M4.500 .5V11.500M9.500 .5V11.500" stroke="#CED0D6" stroke-width="1"/></svg>
<span class="t s" style="left:1108.20px;top:255.52px;font-size:13.5px;color:#DFE1E5;letter-spacing:0.272px;">users</span>
<svg class="i" style="left:1028px;top:283px;" width="13" height="13" fill="none"><g transform="translate(0.6 0.8)"><path d="M4.2 2.4 L7.8 6 L4.2 9.6" stroke="#C0C3C9" stroke-width="1.1" stroke-linecap="round" stroke-linejoin="round"/></g></svg>
<svg class="i" style="left:1048px;top:282px;" width="18" height="17" fill="none"><path d="M2 2H6L8 4H14V12H2z" fill="#404247"/><path d="M7.500 12.600H3Q1.500 12.600 1.500 11.100V2.900Q1.500 1.400 3 1.400H5.800Q6.500 1.400 7 1.900L8.200 3.400H13.100Q14.600 3.400 14.600 4.900V7" stroke="#CED0D6" stroke-width="1.05" stroke-linecap="round" stroke-linejoin="round"/><rect x="7.200" y="7.300" width="9.600" height="8.300" fill="#2B2D30"/><rect x="7.800" y="7.900" width="8.400" height="3.200" rx=".5" fill="#548AF7"/><rect x="7.800" y="11.900" width="8.400" height="3.100" rx=".5" fill="#548AF7"/><circle cx="9.400" cy="9.500" r=".6" fill="#1F2A44"/><circle cx="9.400" cy="13.450" r=".6" fill="#1F2A44"/><path d="M11.200 9.500H14.900M11.200 13.450H14.900" stroke="#1F2A44" stroke-width=".9"/></svg>
<span class="t s" style="left:1070.50px;top:279.52px;font-size:13.5px;color:#DFE1E5;letter-spacing:0.209px;">Server Objects</span>
<span class="t s" style="left:70.30px;top:1013.70px;font-size:13px;color:#B4B8BF;letter-spacing:0.164px;">Database</span>
<svg class="i" style="left:134px;top:1017px;" width="13" height="13" fill="none"><g transform="translate(0 0.3)"><path d="M4.2 2.4 L7.8 6 L4.2 9.6" stroke="#8C8F96" stroke-width="1.05" stroke-linecap="round" stroke-linejoin="round"/></g></svg>
<span class="t s" style="left:151.60px;top:1013.70px;font-size:13px;color:#B4B8BF;letter-spacing:0.377px;">@localhost</span>
<svg class="i" style="left:226px;top:1017px;" width="13" height="13" fill="none"><g transform="translate(0 0.3)"><path d="M4.2 2.4 L7.8 6 L4.2 9.6" stroke="#8C8F96" stroke-width="1.05" stroke-linecap="round" stroke-linejoin="round"/></g></svg>
<span class="t s" style="left:244.30px;top:1013.70px;font-size:13px;color:#B4B8BF;letter-spacing:0.557px;">mynotebook_db</span>
<svg class="i" style="left:350px;top:1017px;" width="13" height="13" fill="none"><g transform="translate(0 0.3)"><path d="M4.2 2.4 L7.8 6 L4.2 9.6" stroke="#8C8F96" stroke-width="1.05" stroke-linecap="round" stroke-linejoin="round"/></g></svg>
<span class="t s" style="left:368.30px;top:1013.70px;font-size:13px;color:#B4B8BF;letter-spacing:0.402px;">tables</span>
<svg class="i" style="left:412px;top:1017px;" width="13" height="13" fill="none"><g transform="translate(0 0.3)"><path d="M4.2 2.4 L7.8 6 L4.2 9.6" stroke="#8C8F96" stroke-width="1.05" stroke-linecap="round" stroke-linejoin="round"/></g></svg>
<svg class="i" style="left:431px;top:1017px;" width="15" height="13" fill="none"><g transform="translate(0 0.3)"><rect x=".5" y=".5" width="13" height="11" rx="1.600" stroke="#B4B8BF" stroke-width="1" fill="none"/><path d="M.5 3.500H13.500M4.500 .5V11.500M9.500 .5V11.500" stroke="#B4B8BF" stroke-width="1"/></g></svg>
<span class="t s" style="left:450.50px;top:1013.70px;font-size:13px;color:#B4B8BF;letter-spacing:0.428px;">users</span>
<span class="t s" style="left:1085.10px;top:1013.54px;font-size:12px;color:#B4B8BF;letter-spacing:-0.379px;">{...}</span>
<span class="t s" style="left:1117.30px;top:1013.70px;font-size:13px;color:#B4B8BF;letter-spacing:0.172px;">SUM: 0</span>
<span class="t s" style="left:1179.30px;top:1013.70px;font-size:13px;color:#B4B8BF;letter-spacing:0.414px;">2:5</span>
<svg class="i" style="left:1216px;top:1017px;" width="15" height="15" fill="none"><path d="M13.300 7.150c0-.48-.04-.94-.12-1.380H7v2.600h3.540c-.15.830-.62 1.530-1.310 2v1.660h2.120c1.240-1.140 1.950-2.830 1.950-4.880z" fill="#4285F4"/><path d="M7 13.600c1.780 0 3.270-.59 4.360-1.600l-2.130-1.650c-.59.400-1.340.63-2.230.63-1.720 0-3.170-1.160-3.690-2.720H1.120v1.710C2.200 12.120 4.430 13.600 7 13.600z" fill="#34A853"/><path d="M3.310 8.260a3.970 3.970 0 0 1 0-2.520V4.030H1.120a6.600 6.600 0 0 0 0 5.940l2.190-1.710z" fill="#FBBC05"/><path d="M7 3.020c.97 0 1.840.33 2.520.99l1.890-1.890C10.270 1.050 8.780.4 7 .4 4.430.4 2.200 1.880 1.120 4.030l2.190 1.710C3.830 4.180 5.280 3.020 7 3.020z" fill="#EA4335"/></svg>
<span class="t s" style="left:1248.00px;top:1013.70px;font-size:13px;color:#B4B8BF;letter-spacing:0.372px;">Python 3.7 (flaskProjectInitial)</span>
<svg class="i" style="left:1451px;top:1017px;" width="17" height="16" fill="none"><rect x="1.200" y="5.600" width="9" height="7.300" rx="1.500" stroke="#CED0D6" stroke-width="1.100"/><path d="M8.300 5.400V3.800A2.700 2.700 0 0 1 13.700 3.800V5" stroke="#CED0D6" stroke-width="1.100" stroke-linecap="round"/><rect x="5" y="8.300" width="1.400" height="2" fill="#8C8F96"/></svg>
</div></div>
<div id="hl"></div>
</div>
</body></html>
